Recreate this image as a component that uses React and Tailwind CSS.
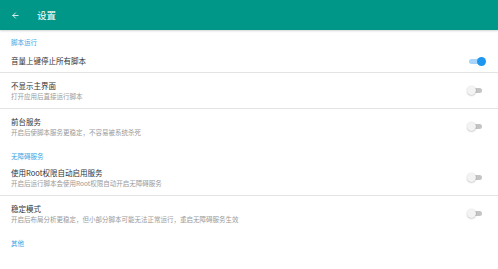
import { ArrowLeft } from 'lucide-react'

const font = { fontFamily: '"Noto Sans CJK SC", "Noto Sans", sans-serif' }

function Toggle({ on }) {
  return (
    <div className="relative w-[19px] h-[9px] shrink-0">
      <div className={`absolute left-[2px] right-[4px] top-[2px] h-[5px] rounded-full ${on ? 'bg-[#a6d4fa]' : 'bg-[#c4c4c4]'}`} />
      <div
        className={`absolute top-0 w-[9px] h-[9px] rounded-full ${
          on ? 'right-0 bg-[#1e96f0]' : 'left-0 bg-[#f3f3f3] shadow-[0_0.5px_1.5px_rgba(0,0,0,0.3)]'
        }`}
      />
    </div>
  )
}

function Category({ children }) {
  return <div className="pl-[11px] pt-[8px] h-[16px] text-[6.5px] leading-[8px] text-[#3aa5e4]">{children}</div>
}

function Row({ title, sub, on, divider }) {
  return (
    <div className={`flex items-center pl-[11px] pr-[12px] ${sub ? 'pt-[8px] pb-[8px]' : 'pt-[10px] pb-[6px]'} ${divider ? 'border-b border-[#e4e4e4]' : ''}`}>
      <div className="flex-1">
        <div className="text-[7.5px] leading-[10px] text-[#333333]">{title}</div>
        {sub && <div className="mt-[1px] text-[6.5px] leading-[8px] text-[#9a9a9a]">{sub}</div>}
      </div>
      <Toggle on={on} />
    </div>
  )
}

export default function App() {
  return (
    <div className="w-[498px] h-[269px] bg-white overflow-hidden" style={font}>
      <div className="relative z-10 h-[30px] bg-[#009688] flex items-center shadow-[0_1px_2px_rgba(0,0,0,0.18)]">
        <ArrowLeft className="ml-[11px] text-white" size={9} strokeWidth={2.2} />
        <span className="ml-[17px] text-[9.5px] text-white">设置</span>
      </div>

      <Category>脚本运行</Category>
      <Row title="音量上键停止所有脚本" on divider />
      <Row title="不显示主界面" sub="打开应用后直接运行脚本" divider />
      <Row title="前台服务" sub="开启后使脚本服务更稳定，不容易被系统杀死" />

      <Category>无障碍服务</Category>
      <Row title="使用Root权限自动启用服务" sub="开启后运行脚本会使用Root权限自动开启无障碍服务" divider />
      <Row title="稳定模式" sub="开启后布局分析更稳定，但小部分脚本可能无法正常运行，重启无障碍服务生效" />

      <Category>其他</Category>
    </div>
  )
}
